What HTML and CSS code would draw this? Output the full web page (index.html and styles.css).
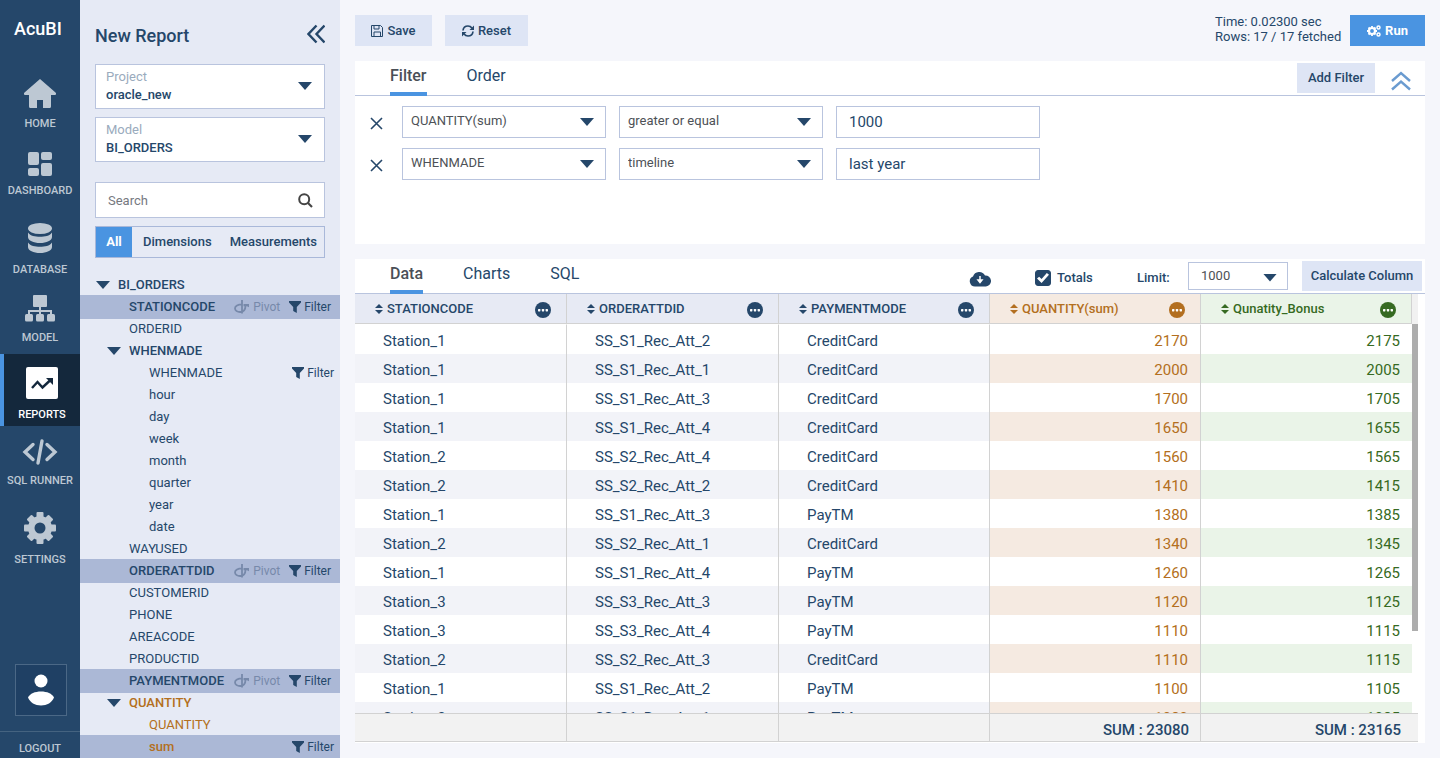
FILE: index.html
```html
<!DOCTYPE html>
<html lang="en">
<head>
<meta charset="utf-8">
<meta name="viewport" content="width=device-width, initial-scale=1">
<title>AcuBI - New Report</title>
<link rel="stylesheet" href="styles.css">
</head>
<body>
<svg class="sprite" aria-hidden="true">
  <symbol id="i-funnel" viewBox="0 0 12 12"><path d="M0 0h12v1.500L7.800 6v6L4.200 10V6L0 1.500z"/></symbol>
  <symbol id="i-pivot" viewBox="0 0 16 14"><path d="M8 0v13.500M8 4.300C4 4.300 1 6 1 8.300S3.500 12 6 12c3.500 0 5.500-2.500 5.500-6.500" fill="none" stroke="currentColor" stroke-width="1.800"/><path d="M9.500 4h5.500v3.300l-2-1h-3.500z"/></symbol>
  <symbol id="i-more" viewBox="0 0 16 16"><circle cx="8" cy="8" r="8"/><g fill="#fff"><rect x="3" y="7" width="2.400" height="2.400" rx=".6"/><rect x="6.800" y="7" width="2.400" height="2.400" rx=".6"/><rect x="10.600" y="7" width="2.400" height="2.400" rx=".6"/></g></symbol>
  <symbol id="i-sort" viewBox="0 0 8 10"><path d="M4 0l4 4H0zM0 6h8l-4 4z"/></symbol>
  <symbol id="i-close" viewBox="0 0 13 13"><path d="M1 1l11 11M12 1L1 12" fill="none" stroke="currentColor" stroke-width="1.600"/></symbol>
</svg>
<div class="app">
  <nav class="rail" aria-label="Main">
    <div class="brand">AcuBI</div>
    <a class="rail-item" href="#home">
      <svg width="32" height="30" viewBox="0 0 32 30"><path d="M16 0l15.500 13.500c1 .9.500 2.500-.8 2.500H27v11.500q0 1.500-1.500 1.500H19v-8h-6v8H6.500Q5 29 5 27.500V16H1.300C0 16-.5 14.400.5 13.500z"/></svg>
      <span>HOME</span></a>
    <a class="rail-item gap-s" href="#dashboard">
      <svg width="24" height="24" viewBox="0 0 24 24"><rect width="11" height="13" rx="2"/><rect x="13" width="11" height="8" rx="2"/><rect y="16" width="11" height="8" rx="2"/><rect x="13" y="11" width="11" height="13" rx="2"/></svg>
      <span>DASHBOARD</span></a>
    <a class="rail-item gap-l" href="#database">
      <svg width="24" height="32" viewBox="0 0 24 32"><ellipse cx="12" cy="5.500" rx="12" ry="5.500"/><path d="M0 9.500c2.500 3.500 7 4.300 12 4.300s9.500-.8 12-4.300V14c0 3.500-5.500 6-12 6S0 17.500 0 14zM0 19.500c2.500 3.500 7 4.300 12 4.300s9.500-.8 12-4.300V24c0 3.500-5.500 6-12 6S0 27.500 0 24z"/></svg>
      <span>DATABASE</span></a>
    <a class="rail-item" href="#model">
      <svg width="30" height="28" viewBox="0 0 30 28"><rect x="8" y="0" width="14" height="12" rx="1"/><path d="M15 12v9M4 21v-5h22v5" fill="none" stroke="currentColor" stroke-width="2"/><rect x="0" y="19" width="8" height="7.500" rx="1.500"/><rect x="11" y="19" width="8" height="7.500" rx="1.500"/><rect x="22" y="19" width="8" height="7.500" rx="1.500"/></svg>
      <span>MODEL</span></a>
    <a class="rail-item gap-m is-active" href="#reports" aria-current="page">
      <svg width="32" height="32" viewBox="0 0 32 32"><rect width="32" height="32" rx="2"/><path d="M6 21l5.500-6 5 5.500 8-7.500" fill="none" stroke="#14283c" stroke-width="2.400"/><path d="M20 11h7v7z" fill="#14283c"/></svg>
      <span>REPORTS</span></a>
    <a class="rail-item" href="#sql">
      <svg width="36" height="26" viewBox="0 0 36 26"><path d="M11 5.500L3 13l8 7.500M25 5.500l8 7.500-8 7.500M20 2l-4 22" fill="none" stroke="currentColor" stroke-width="3.400" stroke-linecap="round"/></svg>
      <span>SQL RUNNER</span></a>
    <a class="rail-item gap-l" href="#settings">
      <svg width="32" height="32" viewBox="-16 -16 32 32"><rect x="-3.500" y="-16" width="7" height="32" rx="1"/><rect x="-16" y="-3.500" width="32" height="7" rx="1"/><rect x="-3.500" y="-15.500" width="7" height="31" rx="1" transform="rotate(45)"/><rect x="-3.500" y="-15.500" width="7" height="31" rx="1" transform="rotate(-45)"/><circle r="12"/><circle r="5.500" fill="#25476a"/></svg>
      <span>SETTINGS</span></a>
    <div class="rail-foot">
      <button class="avatar" type="button" aria-label="Account"><svg width="26" height="32" viewBox="0 0 26 32"><circle cx="13" cy="7" r="6.500"/><path d="M0 23.500C2 19.500 7 17.500 13 17.500s11 2 13 6c-2 5-7 8-13 8s-11-3-13-8z"/></svg></button>
      <a class="logout" href="#logout">LOGOUT</a>
    </div>
  </nav>

  <aside class="side">
    <div class="side-head">
      <h1>New Report</h1>
      <button class="plain" type="button" aria-label="Collapse panel"><svg width="18" height="20" viewBox="0 0 18 20"><path d="M9.500 1.500L1.500 10l8 8.500M17.500 1.500l-8 8.500 8 8.500" fill="none" stroke="currentColor" stroke-width="2.400"/></svg></button>
    </div>
    <div class="picker"><label for="project">Project</label><select id="project"><option>oracle_new</option></select><i class="caret"></i></div>
    <div class="picker"><label for="model">Model</label><select id="model"><option>BI_ORDERS</option></select><i class="caret"></i></div>
    <div class="search">
      <input type="text" placeholder="Search" aria-label="Search">
      <svg width="15" height="15" viewBox="0 0 15 15"><circle cx="6.200" cy="6.200" r="5" fill="none" stroke="currentColor" stroke-width="2"/><path d="M10 10l4 4" stroke="currentColor" stroke-width="2.200"/></svg>
    </div>
    <div class="segments">
      <button class="is-on" type="button">All</button><button type="button">Dimensions</button><button type="button">Measurements</button>
    </div>
    <ul class="tree">
      <li class="node root"><i class="caret"></i><b>BI_ORDERS</b></li>
      <li class="node picked"><b>STATIONCODE</b><button class="act dim" type="button"><svg width="16" height="14"><use href="#i-pivot"/></svg>Pivot</button><button class="act" type="button"><svg width="12" height="12"><use href="#i-funnel"/></svg>Filter</button></li>
      <li class="node"><span>ORDERID</span></li>
      <li class="node open"><i class="caret"></i><b>WHENMADE</b></li>
      <li class="node leaf"><span>WHENMADE</span><button class="act" type="button"><svg width="12" height="12"><use href="#i-funnel"/></svg>Filter</button></li>
      <li class="node leaf"><span>hour</span></li>
      <li class="node leaf"><span>day</span></li>
      <li class="node leaf"><span>week</span></li>
      <li class="node leaf"><span>month</span></li>
      <li class="node leaf"><span>quarter</span></li>
      <li class="node leaf"><span>year</span></li>
      <li class="node leaf"><span>date</span></li>
      <li class="node"><span>WAYUSED</span></li>
      <li class="node picked"><b>ORDERATTDID</b><button class="act dim" type="button"><svg width="16" height="14"><use href="#i-pivot"/></svg>Pivot</button><button class="act" type="button"><svg width="12" height="12"><use href="#i-funnel"/></svg>Filter</button></li>
      <li class="node"><span>CUSTOMERID</span></li>
      <li class="node"><span>PHONE</span></li>
      <li class="node"><span>AREACODE</span></li>
      <li class="node"><span>PRODUCTID</span></li>
      <li class="node picked"><b>PAYMENTMODE</b><button class="act dim" type="button"><svg width="16" height="14"><use href="#i-pivot"/></svg>Pivot</button><button class="act" type="button"><svg width="12" height="12"><use href="#i-funnel"/></svg>Filter</button></li>
      <li class="node open"><i class="caret"></i><b class="measure">QUANTITY</b></li>
      <li class="node leaf"><span class="measure">QUANTITY</span></li>
      <li class="node leaf picked"><b class="measure">sum</b><button class="act" type="button"><svg width="12" height="12"><use href="#i-funnel"/></svg>Filter</button></li>
    </ul>
  </aside>

  <main class="main">
    <div class="toolbar">
      <button class="btn save" type="button"><svg width="12" height="12" viewBox="0 0 12 12"><path d="M.5.500h9l2 2v9H.5zM3 .5v3.500h5V.5M3 11.500V7h6.500v4.500" fill="none" stroke="currentColor"/></svg>Save</button>
      <button class="btn reset" type="button"><svg width="12" height="12" viewBox="0 0 12 12"><path d="M1 5.500C1.300 2.800 3.500 1 6 1c1.600 0 3 .7 3.900 1.900M11 6.500C10.700 9.200 8.500 11 6 11c-1.600 0-3-.7-3.900-1.900" fill="none" stroke="currentColor" stroke-width="1.700"/><path d="M12 .5V5H7.500zM0 11.500V7h4.500z"/></svg>Reset</button>
      <p class="stats">Time: 0.02300 sec<br>Rows: 17 / 17 fetched</p>
      <button class="btn run" type="button"><svg width="14" height="12" viewBox="0 0 14 12"><circle cx="5" cy="6" r="3" fill="none" stroke="currentColor" stroke-width="2.200"/><path d="M5 1v1.500M5 9.500V11M0 6h1.500M8.500 6H10M1.500 2.500l1 1M7.500 8.500l1 1M8.500 2.500l-1 1M2.500 8.500l-1 1" stroke="currentColor" stroke-width="1.800"/><circle cx="11.500" cy="2.600" r="1.500" fill="none" stroke="currentColor" stroke-width="1.500"/><circle cx="11.500" cy="9.400" r="1.500" fill="none" stroke="currentColor" stroke-width="1.500"/></svg>Run</button>
    </div>

    <section class="panel filters">
      <div class="bar">
        <div class="tabs"><button class="tab is-on" type="button">Filter</button><button class="tab" type="button">Order</button></div>
        <button class="btn add" type="button">Add Filter</button>
        <button class="plain fold" type="button" aria-label="Collapse filters"><svg width="20" height="20" viewBox="0 0 20 20"><path d="M1 10l9-8 9 8M1 18.500l9-8 9 8" fill="none" stroke="currentColor" stroke-width="2.400"/></svg></button>
      </div>
      <div class="filter-rows">
        <div class="filter-row">
          <button class="plain" type="button" aria-label="Remove filter"><svg width="13" height="13"><use href="#i-close"/></svg></button>
          <div class="select"><select aria-label="Field"><option>QUANTITY(sum)</option></select><i class="caret"></i></div>
          <div class="select"><select aria-label="Condition"><option>greater or equal</option></select><i class="caret"></i></div>
          <input type="text" value="1000" aria-label="Value">
        </div>
        <div class="filter-row">
          <button class="plain" type="button" aria-label="Remove filter"><svg width="13" height="13"><use href="#i-close"/></svg></button>
          <div class="select"><select aria-label="Field"><option>WHENMADE</option></select><i class="caret"></i></div>
          <div class="select"><select aria-label="Condition"><option>timeline</option></select><i class="caret"></i></div>
          <input type="text" value="last year" aria-label="Value">
        </div>
      </div>
    </section>

    <section class="panel data">
      <div class="bar">
        <div class="tabs"><button class="tab is-on" type="button">Data</button><button class="tab" type="button">Charts</button><button class="tab" type="button">SQL</button></div>
        <button class="plain cloud" type="button" aria-label="Download"><svg width="22" height="16" viewBox="0 0 22 16"><path d="M6 15.500a5.200 5.200 0 0 1-2-10A6.500 6.500 0 0 1 16 4.500a5.500 5.500 0 0 1 1 11z"/><path d="M11 5v5M9 9l2 2.500L13 9z" fill="#fff" stroke="#fff" stroke-width="1.500"/></svg></button>
        <label class="check"><input type="checkbox" checked>Totals</label>
        <label class="limit" for="limit">Limit:</label>
        <div class="select small"><select id="limit"><option>1000</option></select><i class="caret"></i></div>
        <button class="btn calc" type="button">Calculate Column</button>
      </div>
      <div class="grid">
        <div class="tables">
          <div class="scroller">
            <table>
              <colgroup><col class="col-wide"><col class="col-wide"><col><col><col></colgroup>
              <thead><tr>
                <th><div class="th"><button type="button"><svg width="8" height="10"><use href="#i-sort"/></svg>STATIONCODE</button><button type="button" aria-label="Column menu"><svg width="16" height="16"><use href="#i-more"/></svg></button></div></th>
                <th><div class="th"><button type="button"><svg width="8" height="10"><use href="#i-sort"/></svg>ORDERATTDID</button><button type="button" aria-label="Column menu"><svg width="16" height="16"><use href="#i-more"/></svg></button></div></th>
                <th><div class="th"><button type="button"><svg width="8" height="10"><use href="#i-sort"/></svg>PAYMENTMODE</button><button type="button" aria-label="Column menu"><svg width="16" height="16"><use href="#i-more"/></svg></button></div></th>
                <th><div class="th"><button type="button"><svg width="8" height="10"><use href="#i-sort"/></svg>QUANTITY(sum)</button><button type="button" aria-label="Column menu"><svg width="16" height="16"><use href="#i-more"/></svg></button></div></th>
                <th><div class="th"><button type="button"><svg width="8" height="10"><use href="#i-sort"/></svg>Qunatity_Bonus</button><button type="button" aria-label="Column menu"><svg width="16" height="16"><use href="#i-more"/></svg></button></div></th>
              </tr></thead>
              <tbody>
                <tr><td>Station_1</td><td>SS_S1_Rec_Att_2</td><td>CreditCard</td><td>2170</td><td>2175</td></tr>
                <tr><td>Station_1</td><td>SS_S1_Rec_Att_1</td><td>CreditCard</td><td>2000</td><td>2005</td></tr>
                <tr><td>Station_1</td><td>SS_S1_Rec_Att_3</td><td>CreditCard</td><td>1700</td><td>1705</td></tr>
                <tr><td>Station_1</td><td>SS_S1_Rec_Att_4</td><td>CreditCard</td><td>1650</td><td>1655</td></tr>
                <tr><td>Station_2</td><td>SS_S2_Rec_Att_4</td><td>CreditCard</td><td>1560</td><td>1565</td></tr>
                <tr><td>Station_2</td><td>SS_S2_Rec_Att_2</td><td>CreditCard</td><td>1410</td><td>1415</td></tr>
                <tr><td>Station_1</td><td>SS_S1_Rec_Att_3</td><td>PayTM</td><td>1380</td><td>1385</td></tr>
                <tr><td>Station_2</td><td>SS_S2_Rec_Att_1</td><td>CreditCard</td><td>1340</td><td>1345</td></tr>
                <tr><td>Station_1</td><td>SS_S1_Rec_Att_4</td><td>PayTM</td><td>1260</td><td>1265</td></tr>
                <tr><td>Station_3</td><td>SS_S3_Rec_Att_3</td><td>PayTM</td><td>1120</td><td>1125</td></tr>
                <tr><td>Station_3</td><td>SS_S3_Rec_Att_4</td><td>PayTM</td><td>1110</td><td>1115</td></tr>
                <tr><td>Station_2</td><td>SS_S2_Rec_Att_3</td><td>CreditCard</td><td>1110</td><td>1115</td></tr>
                <tr><td>Station_1</td><td>SS_S1_Rec_Att_2</td><td>PayTM</td><td>1100</td><td>1105</td></tr>
                <tr><td>Station_3</td><td>SS_S1_Rec_Att_1</td><td>PayTM</td><td>1080</td><td>1085</td></tr>
              </tbody>
            </table>
          </div>
          <table class="totals">
            <colgroup><col class="col-wide"><col class="col-wide"><col><col><col></colgroup>
            <tbody><tr><td></td><td></td><td></td><td>SUM : 23080</td><td>SUM : 23165</td></tr></tbody>
          </table>
        </div>
        <div class="track"><div class="track-top"></div><div class="track-body"><div class="thumb"></div></div><div class="track-end"></div></div>
      </div>
    </section>
  </main>
</div>
</body>
</html>
```

FILE: styles.css
```css
:root {
  --navy: #25476a;
  --rail-text: #bdc8d3;
  --line: #b9c4de;
  --rule: #d2d2d2;
  --blue: #4a94e1;
  --pale: #dee5f5;
  --orange: #b36f20;
  --green: #366a22;
}
* { box-sizing: border-box; }
body {
  margin: 0;
  background: #f5f6fb;
  color: var(--navy);
  font: 400 13px/16px Roboto, "Liberation Sans", sans-serif;
}
button, input, select { font: inherit; color: inherit; margin: 0; }
button { border: 0; background: none; padding: 0; cursor: pointer; }
select { appearance: none; border: 0; background: none; outline: 0; min-width: 0; }
a { color: inherit; text-decoration: none; }
svg { display: block; fill: currentColor; flex: none; }
b { font-weight: 500; }
.sprite { position: absolute; width: 0; height: 0; }
.plain { display: flex; }
.caret {
  width: 14px;
  height: 8px;
  flex: none;
  background: var(--navy);
  clip-path: polygon(0 0, 100% 0, 50% 100%);
  pointer-events: none;
}

.app { display: flex; height: 100vh; overflow: hidden; }

/* Navigation rail */
.rail {
  display: flex;
  flex-direction: column;
  flex: 0 0 80px;
  background: var(--navy);
  color: var(--rail-text);
  font-size: 11px;
  font-weight: 500;
  line-height: 14px;
}
.brand {
  padding: 18px 0 26px 14px;
  color: #fff;
  font-size: 18px;
  line-height: 22px;
}
.rail-item {
  display: flex;
  flex-direction: column;
  align-items: center;
  gap: 8px;
  padding: 13px 0 5px;
  white-space: nowrap;
}
.gap-s { margin-top: 3px; }
.gap-m { margin-top: 4px; }
.gap-l { margin-top: 7px; }
.rail-item.is-active {
  border-left: 4px solid var(--blue);
  background: #14283c;
  color: #fff;
}
.rail-item.is-active, .is-active ~ .rail-item { gap: 9px; padding-bottom: 4px; }
.rail-foot { margin-top: auto; }
.avatar {
  display: grid;
  place-items: center;
  width: 52px;
  height: 52px;
  margin: 0 0 15px 15px;
  border: 1px solid #4b6886;
  background: #1f4064;
  color: #fff;
}
.logout {
  display: block;
  padding: 10px 0 2px;
  border-top: 1px solid #456380;
  text-align: center;
}

/* Report side panel */
.side {
  flex: 0 0 260px;
  padding-top: 24px;
  overflow: hidden;
  background: #e6eaf5;
}
.side > * { margin-inline: 15px; }
.side > .tree { margin-inline: 0; }
.side-head {
  display: flex;
  align-items: center;
  justify-content: space-between;
  height: 24px;
  margin-bottom: 16px;
}
.side-head h1 { margin: 0; font-size: 18px; font-weight: 500; line-height: 24px; }
.side-head .plain { margin-bottom: 4px; }
.picker {
  display: grid;
  grid-template-columns: 1fr auto;
  align-items: center;
  height: 45px;
  margin-bottom: 8px;
  padding: 3px 12px 4px 10px;
  border: 1px solid var(--line);
  background: #fff;
}
.picker label { grid-area: 1 / 1; color: #9aabbd; }
.picker select { grid-area: 2 / 1 / 3 / 3; padding: 0; font-weight: 500; }
.picker .caret { grid-area: 1 / 2 / 3 / 3; }
.search {
  display: flex;
  align-items: center;
  height: 36px;
  margin-top: 20px;
  padding-right: 11px;
  border: 1px solid var(--line);
  background: #fff;
  color: #444;
}
.search input {
  flex: 1;
  min-width: 0;
  padding: 2px 12px 0;
  border: 0;
  outline: 0;
  background: none;
}
.search input::placeholder { color: #76797f; opacity: 1; }
.segments {
  display: flex;
  height: 32px;
  margin-top: 8px;
  border: 1px solid #a9b8d9;
  font-weight: 500;
}
.segments button { flex: 1 1 auto; padding-left: 4px; }
.segments button:first-child { flex: 0 0 36px; padding: 0; }
.segments .is-on { background: var(--blue); color: #fff; font-weight: 700; }

.tree { margin: 16px 0 0; padding: 0; list-style: none; }
.node {
  display: flex;
  align-items: center;
  height: 22px;
  padding: 0 9px 0 49px;
}
.node b, .node > span { flex: 1; white-space: nowrap; }
.node .caret { margin-right: 8px; }
.root { padding-left: 16px; }
.open { padding-left: 27px; }
.leaf { padding-left: 69px; padding-right: 6px; }
.picked { height: 24px; margin-block: -1px; background: #abb8d6; }
.measure { color: var(--orange); }
.act { display: flex; align-items: center; gap: 3px; font-size: 12px; }
.act.dim { margin-right: 9px; color: #7789aa; }

/* Main area */
.main {
  display: flex;
  flex: 1;
  flex-direction: column;
  min-width: 0;
  gap: 15px;
  padding: 15px;
}
.toolbar { display: flex; align-items: center; height: 31px; }
.btn {
  display: flex;
  align-items: center;
  justify-content: center;
  gap: 4px;
  height: 31px;
  background: var(--pale);
  font-weight: 500;
  white-space: nowrap;
}
.save { width: 77px; margin-right: 13px; }
.reset { width: 83px; }
.run { width: 75px; background: var(--blue); color: #fff; font-weight: 700; }
.stats { width: 127px; margin: 0 8px 3px auto; line-height: 15px; white-space: nowrap; }

.panel { background: #fff; }
.bar {
  display: flex;
  align-items: center;
  height: 35px;
  border-bottom: 1px solid var(--line);
}
.tabs { display: flex; align-self: stretch; gap: 40px; margin: 0 auto -1px 35px; }
.tab {
  padding: 0 0 1px;
  border-bottom: 4px solid transparent;
  font-size: 16px;
}
.tab.is-on { border-color: var(--blue); color: #4a4f57; font-weight: 500; }
.add { width: 78px; height: 30px; margin-right: 16px; }
.fold { margin: 5px 14px 0 0; color: #6a9bd0; }

.filters { flex: none; min-height: 183px; }
.filter-rows { display: grid; gap: 10px; padding: 10px 15px; }
.filter-row {
  display: grid;
  grid-template-columns: 19px repeat(3, 204px);
  align-items: center;
  column-gap: 13px;
}
.filter-row .plain { padding-top: 2px; }
.select, .filter-row input {
  height: 32px;
  border: 1px solid var(--line);
  background: #fff;
}
.select { display: grid; align-items: center; color: #4d5156; }
.select select { grid-area: 1 / 1; height: 28px; padding: 0 8px 2px; }
.select .caret { grid-area: 1 / 1; justify-self: end; margin-right: 11px; }
.filter-row input { padding: 0 12px; outline: 0; font-size: 15px; }

.data { display: flex; flex: 1; flex-direction: column; min-height: 0; }
.cloud { margin: 6px 44px 0 0; }
.check {
  display: flex;
  align-items: center;
  gap: 6px;
  width: 102px;
  margin-top: 4px;
  font-weight: 500;
}
.check input {
  appearance: none;
  width: 16px;
  height: 16px;
  border-radius: 3px;
  border: 1px solid var(--navy);
  display: grid;
  place-items: center;
}
.check input:checked { background: var(--navy); }
.check input:checked::before {
  content: "";
  width: 12px;
  height: 10px;
  background: #fff;
  clip-path: polygon(0 55%, 18% 37%, 38% 60%, 82% 0, 100% 18%, 38% 100%);
}
.limit { width: 51px; margin-top: 4px; font-weight: 500; }
.select.small { width: 100px; height: 28px; margin: 0 14px 1px 0; }
.select.small select { height: 24px; padding: 0 12px; }
.select.small .caret { margin: 4px 10px 0 0; }
.calc { width: 120px; height: 30px; margin-right: 3px; }

/* Result grid */
.grid { display: flex; flex: 1; min-height: 0; padding: 0 7px 1px 0; }
.tables { display: flex; flex: 1; flex-direction: column; min-width: 0; }
.scroller { flex: 1; min-height: 0; overflow: auto; scrollbar-width: none; }
table { width: 100%; table-layout: fixed; border-collapse: separate; border-spacing: 0; }
.col-wide { width: 212px; }
th, td { padding: 0; border-right: 1px solid var(--rule); }
th {
  position: sticky;
  top: 0;
  height: 30px;
  border-bottom: 1px solid var(--rule);
  background: #e7eaf4;
  font-weight: 500;
}
th:nth-child(4) { background: #f5eae1; color: var(--orange); }
th:nth-child(5) { background: #eaf4e8; color: var(--green); }
.th { display: flex; align-items: center; justify-content: space-between; padding: 0 15px 0 20px; }
.th button { display: flex; align-items: center; gap: 4px; }
.th button:last-child { margin-top: 3px; }
td { height: 29px; padding: 3px 0 0 28px; font-size: 15px; line-height: 20px; }
td:nth-child(n + 4) { padding-right: 12px; text-align: right; }
td:last-child { border-right: 0; }
.scroller tr:first-child td { height: 30px; border-top: 1px solid #fff; }
.scroller tr:nth-child(even) td { background: #f2f3f8; }
.scroller tr:nth-child(even) td:nth-child(4) { background: #f5eae1; }
.scroller tr:nth-child(even) td:nth-child(5) { background: #eaf4e8; }
.scroller td:nth-child(4) { color: var(--orange); }
.scroller td:nth-child(5) { color: var(--green); }
.totals td {
  padding-top: 4px;
  border-block: 1px solid var(--rule);
  background: #f2f2f2;
  font-weight: 500;
}
.totals td:nth-child(n + 4) { padding-right: 11px; }
.track { display: flex; flex-direction: column; flex: 0 0 6px; }
.track-top { height: 30px; background: #f1f1f1; }
.track-body { flex: 1; }
.thumb { height: 79%; background: #adadad; }
.track-end { height: 29px; border-block: 1px solid var(--rule); background: #f2f2f2; }
```
